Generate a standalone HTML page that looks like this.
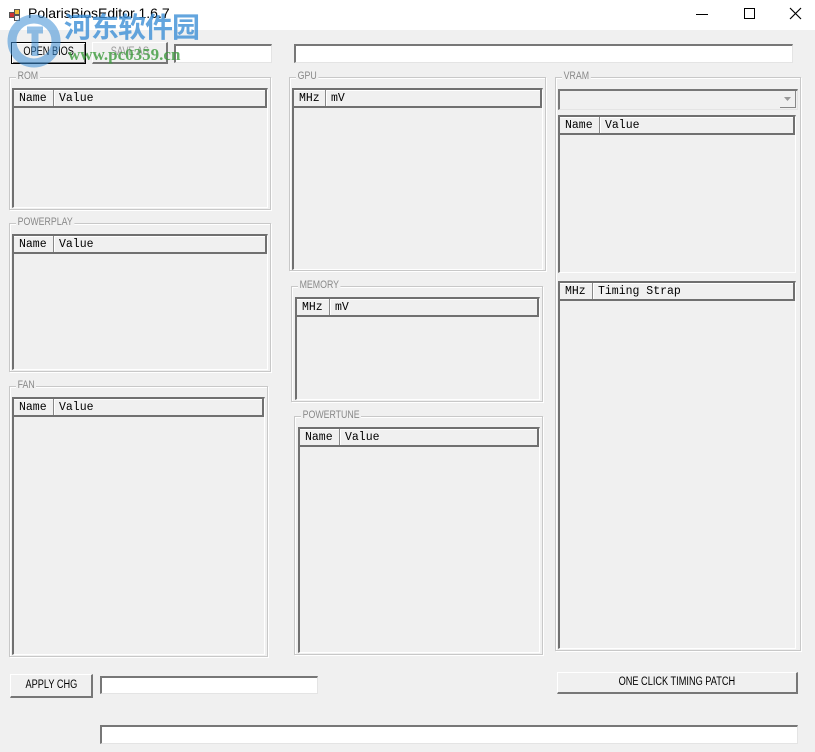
<!DOCTYPE html>
<html><head><meta charset="utf-8"><style>
*{box-sizing:border-box;margin:0;padding:0}
body{width:815px;height:752px;background:#f0f0f0;position:relative;overflow:hidden;font-family:"Liberation Mono",monospace;font-size:11px;color:#000}
.a{position:absolute}
.title{left:0;top:0;width:815px;height:30px;background:#fff}
.grp{position:absolute;border:1px solid #c8c8c8;box-shadow:inset 1px 1px 0 #fff,1px 1px 0 #fff}
.grp span{position:absolute;top:-8px;left:6px;background:#f0f0f0;padding:0 2px;font-family:"Liberation Sans",sans-serif;font-size:11px;color:#888;line-height:13px;transform:scaleX(.8);transform-origin:left}
.lv{position:absolute;border-top:2px solid #707070;border-left:2px solid #707070;border-right:1px solid #fff;border-bottom:1px solid #fff;background:#f0f0f0}
.hd{position:absolute;left:0;right:0;top:0;height:18px;border-bottom:2px solid #707070;border-right:2px solid #707070;display:flex;background:#f0f0f0;box-shadow:inset 0 1px 0 #fff}
.hd div{height:16px;line-height:17px;padding-left:5px;border-right:1px solid #888;box-shadow:1px 0 0 #fff;font-size:11.5px}
.hd div:last-child{border-right:none;box-shadow:none}
.tb{position:absolute;background:#fff;border-top:2px solid #777;border-left:2px solid #777;border-bottom:1px solid #e4e4e4;border-right:1px solid #e4e4e4}
.btn{position:absolute;background:#f0f0f0;border-top:1px solid #fff;border-left:1px solid #fff;border-right:2px solid #777;border-bottom:2px solid #777;text-align:center;font-family:"Liberation Sans",sans-serif;font-size:11.5px;white-space:nowrap}
.btn b{font-weight:normal;display:inline-block;transform:scaleX(.8)}
</style></head><body>
<div class="a title"></div>
<div class="a" style="left:9px;top:9px;width:12px;height:12px">
<div class="a" style="left:0;top:3px;width:6px;height:6px;background:#c33;border:1px solid #555"></div>
<div class="a" style="left:5px;top:0;width:6px;height:6px;background:#eb3;border:1px solid #555"></div>
<div class="a" style="left:5px;top:6px;width:6px;height:6px;background:#eee;border:1px solid #555"></div></div>
<div class="a" style="left:28px;top:5px;font-family:'Liberation Sans',sans-serif;font-size:14px">PolarisBiosEditor 1.6.7</div>
<div class="a" style="left:696px;top:14px;width:12px;height:1px;background:#000"></div>
<div class="a" style="left:744px;top:8px;width:11px;height:11px;border:1px solid #000"></div>
<svg class="a" style="left:789px;top:7px" width="13" height="13"><path d="M1 1L12 12M12 1L1 12" stroke="#000" stroke-width="1.2"/></svg>

<div class="btn" style="left:11px;top:42px;width:75px;height:22px;border:1px solid #000;box-shadow:inset 1px 1px 0 #fff,inset -1px -1px 0 #777;line-height:19px"><b>OPEN BIOS</b></div>
<div class="btn" style="left:92px;top:42px;width:76px;height:22px;line-height:19px;color:#999"><b>SAVE AS</b></div>
<div class="tb" style="left:174px;top:44px;width:98px;height:19px"></div>
<div class="tb" style="left:294px;top:44px;width:499px;height:19px"></div>

<!-- watermark -->
<svg class="a" style="left:5px;top:12px;opacity:.55" width="58" height="58"><circle cx="29" cy="29" r="22" fill="none" stroke="#3d8fd6" stroke-width="9"/><path d="M22 18h16M30 18v26" stroke="#3d8fd6" stroke-width="7"/></svg>
<div class="a" style="left:64px;top:9px;font-family:'Noto Sans CJK SC',sans-serif;font-weight:bold;font-size:28px;line-height:34px;color:#3d8fd6;opacity:.8;letter-spacing:-1px">河东软件园</div>
<div class="a" style="left:68px;top:45px;font-family:'Liberation Serif',serif;font-weight:bold;font-size:17px;color:#3a9a3a;opacity:.8">www.pc0359.cn</div>

<div class="grp" style="left:9px;top:77px;width:262px;height:133px"><span>ROM</span></div>
<div class="lv" style="left:12px;top:88px;width:256px;height:120px"><div class="hd"><div style="width:40px">Name</div><div>Value</div></div></div>
<div class="grp" style="left:9px;top:223px;width:262px;height:149px"><span>POWERPLAY</span></div>
<div class="lv" style="left:12px;top:234px;width:256px;height:136px"><div class="hd"><div style="width:40px">Name</div><div>Value</div></div></div>
<div class="grp" style="left:9px;top:386px;width:259px;height:271px"><span>FAN</span></div>
<div class="lv" style="left:12px;top:397px;width:253px;height:258px"><div class="hd"><div style="width:40px">Name</div><div>Value</div></div></div>

<div class="grp" style="left:289px;top:77px;width:257px;height:194px"><span>GPU</span></div>
<div class="lv" style="left:292px;top:88px;width:251px;height:182px"><div class="hd"><div style="width:32px">MHz</div><div>mV</div></div></div>
<div class="grp" style="left:291px;top:286px;width:252px;height:116px"><span>MEMORY</span></div>
<div class="lv" style="left:295px;top:297px;width:245px;height:103px"><div class="hd"><div style="width:33px">MHz</div><div>mV</div></div></div>
<div class="grp" style="left:294px;top:416px;width:249px;height:239px"><span>POWERTUNE</span></div>
<div class="lv" style="left:298px;top:427px;width:242px;height:226px"><div class="hd"><div style="width:40px">Name</div><div>Value</div></div></div>

<div class="grp" style="left:555px;top:77px;width:246px;height:574px"><span>VRAM</span></div>
<div class="tb" style="left:558px;top:89px;width:240px;height:21px;background:#f0f0f0"></div>
<div class="a" style="left:780px;top:91px;width:16px;height:17px;background:#f0f0f0;border-right:1px solid #888;border-bottom:1px solid #888"></div>
<svg class="a" style="left:784px;top:97px" width="8" height="5"><path d="M0 0h7L3.5 4z" fill="#999"/></svg>
<div class="lv" style="left:558px;top:115px;width:238px;height:158px"><div class="hd"><div style="width:40px">Name</div><div>Value</div></div></div>
<div class="lv" style="left:558px;top:281px;width:238px;height:368px"><div class="hd"><div style="width:33px">MHz</div><div>Timing Strap</div></div></div>

<div class="btn" style="left:10px;top:674px;width:83px;height:24px;line-height:21px"><b>APPLY CHG</b></div>
<div class="tb" style="left:100px;top:676px;width:218px;height:18px"></div>
<div class="btn" style="left:557px;top:672px;width:241px;height:22px;line-height:19px"><b>ONE CLICK TIMING PATCH</b></div>
<div class="tb" style="left:100px;top:725px;width:698px;height:19px"></div>
</body></html>
